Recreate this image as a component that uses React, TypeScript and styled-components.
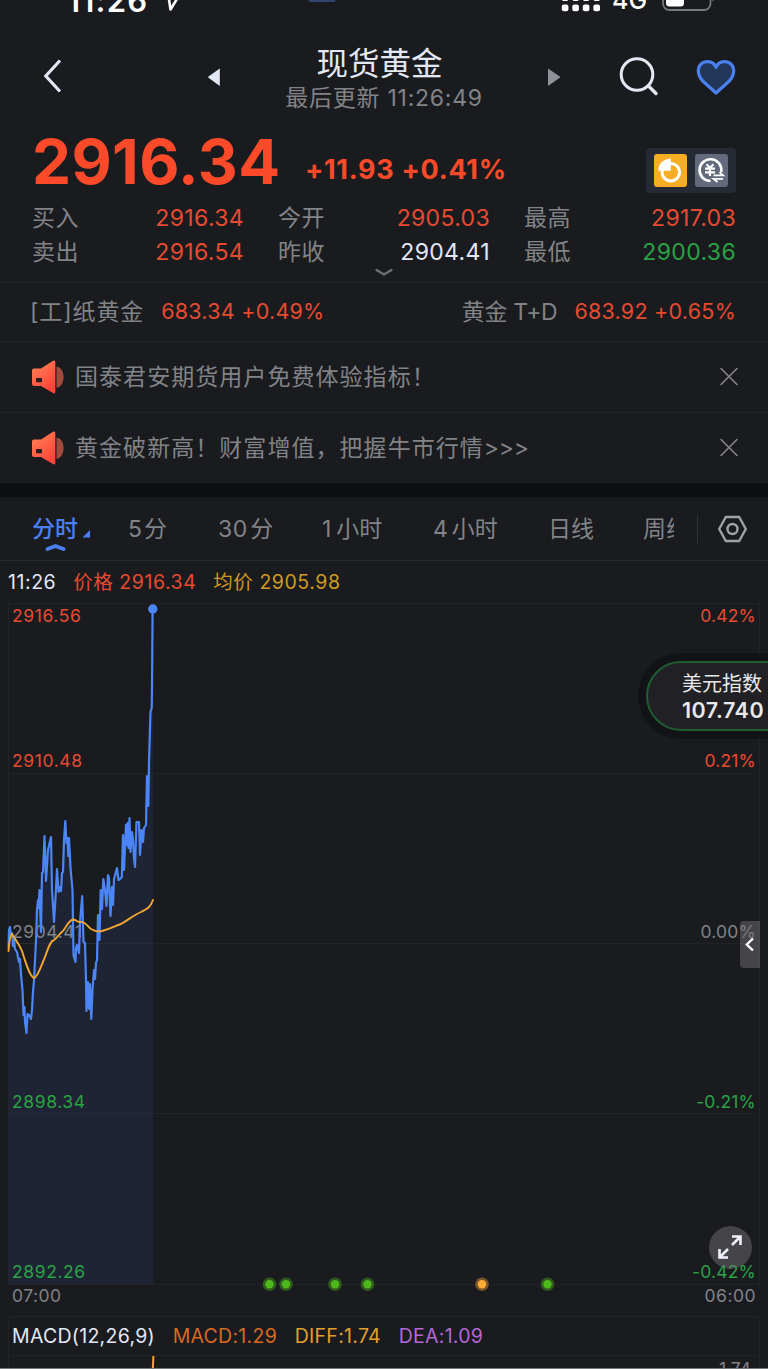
import React from "react";
import styled, { createGlobalStyle } from "styled-components";

const c = {
  bg: "#1a1b1f",
  line: "#222327",
  band: "#0d0e12",
  text: "#e3e8f5",
  grey: "#828387",
  red: "#e64b30",
  hot: "#fa4a29",
  green: "#2ba245",
  blue: "#4a80f0",
  amber: "#f3a733",
};

const Global = createGlobalStyle`
  * { box-sizing: border-box; }
  html, body { margin: 0; background: ${c.bg}; }
  body { overflow: hidden; }
`;

const Screen = styled.div`
  position: relative;
  width: 768px;
  height: 1369px;
  overflow: hidden;
  background: ${c.bg};
  color: ${c.grey};
  font-family: Inter, "Noto Sans CJK SC", sans-serif;
  font-size: 23px;
  font-weight: 400;
  line-height: 1;
  white-space: nowrap;
  border-bottom: 1px solid #77787a;
`;

/* ---------- status bar ---------- */

const StatusBar = styled.div`
  display: flex;
  align-items: flex-end;
  height: 20px;
  overflow: hidden;
  color: #fff;
`;

const Clock = styled.div`
  width: 97px;
  margin: 0 0 4px 67px;
  font-size: 31px;
  font-weight: 600;
  letter-spacing: 1.2px;
`;

const Network = styled.div`
  width: 50px;
  margin-bottom: 7px;
  font-size: 25px;
  font-weight: 500;
`;

const Drawing = styled.svg<{ $ml?: number }>`
  display: block;
  flex: none;
  overflow: visible;
  margin-left: ${(p) => p.$ml ?? 0}px;
`;

/* ---------- header ---------- */

const Header = styled.header`
  display: grid;
  grid-template-columns: 164px 100px 240px 100px 70px 84px;
  align-items: center;
  justify-items: center;
  height: 100px;
`;

const BackButton = styled.div`
  justify-self: start;
  padding: 11px 0 0 42px;
`;

const HeaderButton = styled.div`
  padding-top: 13px;
`;

const Titles = styled.div`
  display: flex;
  flex-direction: column;
  align-items: center;
  align-self: start;
  padding-top: 28px;
`;

const Title = styled.div`
  margin-right: 9px;
  color: ${c.text};
  font-size: 31.5px;
  line-height: 32px;
`;

const Updated = styled.div`
  margin-top: 7px;
  font-size: 23px;
  line-height: 23px;
  letter-spacing: 0.75px;
`;

/* ---------- quote ---------- */

const PriceRow = styled.div`
  display: flex;
  height: 81px;
  padding: 0 32px;
  color: ${c.hot};
`;

const Price = styled.div`
  width: 273px;
  padding-top: 11px;
  font-size: 62px;
  font-weight: 700;
  letter-spacing: 0.4px;
`;

const Change = styled.div`
  flex: 1;
  padding-top: 36px;
  font-size: 27px;
  font-weight: 650;
  letter-spacing: 0.7px;
`;

const Tools = styled.div`
  display: flex;
  gap: 8px;
  width: 90px;
  height: 45px;
  margin-top: 28px;
  padding: 6px 8px;
  border-radius: 4px;
  background: #262a35;
`;

const Stats = styled.div`
  display: grid;
  grid-template-columns: repeat(3, 212px);
  column-gap: 34px;
  grid-auto-rows: 34px;
  height: 81px;
  padding: 0 32px 0;
`;

const Stat = styled.div`
  display: flex;
  justify-content: space-between;
  align-items: center;
  padding-top: 1px;
  letter-spacing: 0.5px;
`;

const Value = styled.span<{ $color?: string; $small?: boolean }>`
  color: ${(p) => p.$color ?? c.red};
  font-size: ${(p) => (p.$small ? 21.5 : 23)}px;
  letter-spacing: ${(p) => (p.$small ? 0.25 : 0.35)}px;
`;

const More = styled.div`
  position: absolute;
  left: 375px;
  top: 267px;
`;

const Related = styled.div`
  display: flex;
  justify-content: space-between;
  align-items: center;
  height: 59px;
  padding: 0 32px 0 30px;
  border-top: 1px solid ${c.line};
`;

const RelatedItem = styled.div<{ $tight?: boolean }>`
  display: flex;
  align-items: center;
  gap: 17px;
  letter-spacing: ${(p) => (p.$tight ? -0.3 : 0.9)}px;
`;

const Notice = styled.div`
  display: flex;
  align-items: center;
  height: 71px;
  padding: 0 30px 0 32px;
  border-top: 1px solid ${c.line};
  letter-spacing: 1.05px;
`;

const NoticeText = styled.div`
  flex: 1;
  margin-left: 10px;
`;

const Chevrons = styled.span`
  letter-spacing: -0.3px;
`;

const Band = styled.div`
  height: 14px;
  background: ${c.band};
`;

/* ---------- period tabs ---------- */

const TabBar = styled.nav`
  display: flex;
  align-items: center;
  height: 64px;
  border-bottom: 1px solid #292a2e;
`;

const Tabs = styled.div`
  display: flex;
  align-items: center;
  gap: 51px;
  width: 674px;
  height: 63px;
  padding: 1px 0 0 32px;
  overflow: hidden;
`;

const Tab = styled.div<{ $active?: boolean; $width: number }>`
  position: relative;
  flex: none;
  width: ${(p) => p.$width}px;
  color: ${(p) => (p.$active ? c.blue : c.grey)};
  font-weight: ${(p) => (p.$active ? 500 : 400)};
`;

const TabNumber = styled.span<{ $gap: number }>`
  margin-right: ${(p) => p.$gap}px;
  letter-spacing: 0.5px;
`;

const TabMark = styled.svg`
  position: absolute;
  left: 13px;
  top: 6px;
  overflow: visible;
`;

const Settings = styled.div`
  display: flex;
  align-items: center;
  height: 28px;
  margin-left: 23px;
  padding-left: 20px;
  border-left: 1px solid #303135;
`;

/* ---------- chart ---------- */

const Legend = styled.div`
  display: flex;
  align-items: center;
  gap: 17px;
  height: 42px;
  padding: 2px 0 0 8px;
  font-size: 19.5px;
  letter-spacing: 0.55px;
`;

const Ink = styled.span<{ $color: string }>`
  color: ${(p) => p.$color};
`;

const Chart = styled.div`
  position: relative;
  width: 752px;
  height: 682px;
  margin-left: 8px;
`;

const Layer = styled.svg`
  position: absolute;
  inset: 0;
  display: block;
  overflow: visible;
`;

const AxisLabel = styled.span<{ $top: number; $side: "left" | "right"; $color: string }>`
  position: absolute;
  top: ${(p) => p.$top}px;
  ${(p) => p.$side}: 4px;
  color: ${(p) => p.$color};
  font-size: 17.5px;
  letter-spacing: ${(p) => (p.$side === "left" ? 0.6 : 0.2)}px;
`;

const Times = styled.div`
  display: flex;
  justify-content: space-between;
  height: 31px;
  padding: 2px 12px 0;
  font-size: 17.5px;
  letter-spacing: 0.5px;
`;

const MacdPanel = styled.section`
  width: 752px;
  height: 60px;
  margin-left: 8px;
  border: 1px solid ${c.line};
  border-bottom: 0;
`;

const MacdLegend = styled.div`
  display: flex;
  align-items: center;
  gap: 17.7px;
  height: 39px;
  padding: 1px 0 0 3px;
  border-bottom: 1px solid ${c.line};
  font-size: 19.5px;
  letter-spacing: 0.28px;
`;

const MacdPlot = styled.div`
  display: flex;
  justify-content: space-between;
  padding-right: 8px;
  font-size: 17.5px;
`;

const ScaleMax = styled.span`
  margin-top: 4px;
`;

/* ---------- floating controls ---------- */

const IndexPill = styled.aside`
  position: absolute;
  left: 646px;
  top: 661px;
  width: 160px;
  height: 70px;
  padding: 11px 0 0 34px;
  border: 2.5px solid #205c31;
  border-radius: 35px;
  background: #212024;
  box-shadow: 0 0 0 8px #121317;
  color: #e8e9ec;
  font-size: 20px;
`;

const IndexValue = styled.div`
  margin-top: 6px;
  font-size: 21.5px;
  font-weight: 600;
  letter-spacing: 0.5px;
`;

const Drawer = styled.div`
  position: absolute;
  right: 0;
  top: 318px;
  display: grid;
  place-items: center;
  width: 20px;
  height: 47px;
  border-radius: 4px 0 0 4px;
  background: rgba(112, 112, 116, 0.5);
`;

const Expand = styled.div`
  position: absolute;
  left: 701px;
  top: 623px;
  display: grid;
  place-items: center;
  width: 43px;
  height: 43px;
  border-radius: 50%;
  background: rgba(112, 112, 116, 0.5);
`;

const priceLine =
  "8.5,948 9,930 10,927 11,937 12,933 13,946 14,940 15,949 17,952 19,962 20,959 21,974 22.5,990 23.5,1015 24.5,1007 25,1022 26.5,1033 27.5,1014 29,1015 31,1019 32,1010 33,992 34,980 35,960 36,940 37,910 38,900 38.5,908 39.5,890 41,932 42,873 43,872 44.5,836 45.5,865 46,881 48,850 51,837 52,890 54,922 55.5,898 57,869 58.5,892 60,887 61,891 62,873 63,872 64,840 65.3,821 66.5,843 67.5,838 68.3,856 69,838 70.5,868 72.5,890 73.5,955 75.5,962 76,948 77,945 79,953 80,922 82.2,896 83.5,942 85,943 86,980 86.5,1011 88,982 89,1009 90,984 91.3,1019 92.5,990 94,970 95,979 96,963 97,960 98,915 99.5,940 100.7,890 102,909 103.3,879 105,890 106.5,906 108,875 109,878 110.5,916 112,887 113,905 114,879 117,868 118.5,880 120,879 121.8,877 123,835 124,870 126,825 126.8,845 127.5,823 128.5,848 129.5,818 130.5,852 132,832 133,840 134,858 135,867 136.5,822 139,822 140,855 141.5,830 143,842 144,828 146,825 147,776 148.3,806 149,762 149.8,735 150.5,712 151.7,708 152,690 152.6,609";

const averageLine =
  "M8.5 951 Q10 934 12 934 C15 940 19 943 22 951 C26 964 30 977 34 978 C38 977 41 966 45 957 C48 949 50 941 54 940 C58 937 60 933 63 931 C67 926 69 920 73 919.5 C77 920 77 922 80 922 C85 921 88 927 91 929 C95 931 97 932 102 931 C110 929 115 926 121 924 C128 920 134 915 141 912 C147 909 150 908 153 900";

const events: [number, string][] = [
  [269.5, "#4db81c"],
  [286, "#4db81c"],
  [335, "#4db81c"],
  [367.5, "#4db81c"],
  [482, "#ffac36"],
  [547.5, "#4db81c"],
];

const stats: [string, string, string?][] = [
  ["买入", "2916.34"],
  ["今开", "2905.03"],
  ["最高", "2917.03"],
  ["卖出", "2916.54"],
  ["昨收", "2904.41", c.text],
  ["最低", "2900.36", c.green],
];

const tabs: { n?: string; label: string; w: number; gap?: number }[] = [
  { n: "5", label: "分", w: 39, gap: 1.5 },
  { n: "30", label: "分", w: 53, gap: 2.5 },
  { n: "1", label: "小时", w: 60, gap: 4.5 },
  { n: "4", label: "小时", w: 64, gap: 3.5 },
  { label: "日线", w: 44 },
  { label: "周线", w: 46 },
];

const axis: [number, string, string, string][] = [
  [4, "2916.56", "0.42%", c.red],
  [149, "2910.48", "0.21%", c.red],
  [320, "2904.41", "0.00%", c.grey],
  [490, "2898.34", "-0.21%", c.green],
  [660, "2892.26", "-0.42%", c.green],
];

const Horn = () => (
  <Drawing width="33" height="34" viewBox="0 0 33 34">
    <defs>
      <linearGradient id="horn" x1="0" y1="0" x2="0.6" y2="1">
        <stop offset="0" stopColor="#ff8658" />
        <stop offset="1" stopColor="#fb463a" />
      </linearGradient>
    </defs>
    <path d="M24.5 6.5 C34 8 34 26 24.5 28 Z" fill="#a04b3b" />
    <path
      d="M2 8.5 H9 L21 0.8 Q23.3 -0.3 23.3 2 V32 Q23.3 34.3 21 33 L9 26 H2 Q0 26 0 24 V10.5 Q0 8.5 2 8.5 Z"
      fill="url(#horn)"
    />
    <rect x="4" y="18" width="6" height="4.2" rx="0.5" fill="#2a1c1e" />
  </Drawing>
);

const Close = () => (
  <Drawing width="18" height="18" viewBox="0 0 18 18" stroke="#86878b" strokeWidth="1.6" strokeLinecap="round">
    <path d="M1 0.5 L17 16.5 M17 0.5 L1 16.5" />
  </Drawing>
);

export default function App() {
  return (
    <Screen>
      <Global />
      <StatusBar>
        <Clock>11:26</Clock>
        <Drawing width="20" height="20" viewBox="164 0 20 20" fill="none" stroke="#fff" strokeWidth="2.6" strokeLinejoin="round">
          <path d="M160 -4 H168.5 L170.5 9.5 L180 -6" />
        </Drawing>
        <Drawing $ml={124} width="28" height="20" viewBox="0 0 28 20">
          <rect y="-10" width="28" height="12" rx="3" fill="#30466f" />
        </Drawing>
        <Drawing $ml={225} width="51" height="20" viewBox="0 0 51 20" fill="#fff">
          {[0, 10.5, 21, 31.6].map((x) => (
            <g key={x}>
              <rect x={x + 0.8} y="4.5" width="6.6" height="6.8" rx="2" />
              <rect x={x + 0.8} y="-6" width="6.6" height="7" rx="2" />
            </g>
          ))}
        </Drawing>
        <Network>4G</Network>
        <Drawing width="54" height="20" viewBox="0 0 54 20">
          <rect x="1" y="-14" width="47.5" height="24" rx="6.5" fill="none" stroke="#77787b" strokeWidth="1.8" />
          <rect x="4" y="-12" width="18" height="18.5" rx="3.5" fill="#fff" />
          <path d="M50.5 -6 V1.5 Q53 0 53 -3 Z" fill="#77787b" />
        </Drawing>
      </StatusBar>

      <Header>
        <BackButton>
          <Drawing width="20" height="34" viewBox="0 0 20 34" fill="none" stroke={c.text} strokeWidth="3.2">
            <path d="M18 1.5 L3.8 17 L18 32.5" />
          </Drawing>
        </BackButton>
        <HeaderButton>
          <Drawing width="14" height="20" viewBox="0 0 14 20">
            <path d="M12.8 1.4 V19 L1.5 10.8 Q0.8 10.2 1.5 9.6 Z" fill={c.text} />
          </Drawing>
        </HeaderButton>
        <Titles>
          <Title>现货黄金</Title>
          <Updated>最后更新 11:26:49</Updated>
        </Titles>
        <HeaderButton>
          <Drawing width="14" height="20" viewBox="0 0 14 20">
            <path d="M1 1.4 V19 L12.8 10.8 Q13.4 10.2 12.8 9.6 Z" fill="#8f9199" />
          </Drawing>
        </HeaderButton>
        <HeaderButton>
          <Drawing width="40" height="40" viewBox="0 0.5 40 40" fill="none" stroke={c.text} strokeWidth="3" strokeLinecap="round">
            <circle cx="18" cy="18" r="15.8" />
            <path d="M29.5 29.5 L37 37" strokeWidth="3.4" />
          </Drawing>
        </HeaderButton>
        <HeaderButton>
          <Drawing width="40" height="36" viewBox="0 -0.5 40 36" fill="#223658" stroke={c.blue} strokeWidth="3.2" strokeLinejoin="round">
            <path d="M20 8 C17 0 6 0.5 2.8 8 C1 14 3.5 18 7 21.8 L20 33.5 L33 21.8 C36.5 18 39 14 37.2 8 C34 0.5 23 0 20 8 Z" />
          </Drawing>
        </HeaderButton>
      </Header>

      <PriceRow>
        <Price>2916.34</Price>
        <Change>+11.93 +0.41%</Change>
        <Tools>
          <Drawing width="33" height="33" viewBox="0 0 33 33">
            <rect width="33" height="33" rx="3" fill="#f7ad24" />
            <circle cx="16.8" cy="18.2" r="8.8" fill="none" stroke="#fff" strokeWidth="3" />
            <path d="M16.8 4.5 V16.8 H4.2 Q4.5 6 16.8 4.5 Z" fill="#fff" />
          </Drawing>
          <Drawing width="33" height="33" viewBox="0 0 33 33" fill="none" stroke="#fff" strokeWidth="2.2">
            <rect width="33" height="33" rx="3" fill="#636a7c" stroke="none" />
            <path d="M15.5 27 A10.9 10.9 0 1 1 26.2 18" strokeWidth="2.6" />
            <path d="M11.6 10.3 L15 14 L18.4 10.3 M15 14 V22 M10 14.6 H20 M10 18.4 H20" />
            <path d="M18.5 21.3 H28 L24.5 18.2 M28 24.8 H18.5 L22.5 28" strokeWidth="1.8" />
          </Drawing>
        </Tools>
      </PriceRow>

      <Stats>
        {stats.map(([label, value, color]) => (
          <Stat key={label}>
            {label}
            <Value $color={color}>{value}</Value>
          </Stat>
        ))}
      </Stats>
      <More>
        <Drawing width="18" height="10" viewBox="0 0 18 10" fill="none" stroke="#717276" strokeWidth="2.2" strokeLinecap="round">
          <path d="M1.5 3 L9 7.4 L16.5 3" />
        </Drawing>
      </More>

      <Related>
        <RelatedItem>
          [工]纸黄金 <Value $small>683.34 +0.49%</Value>
        </RelatedItem>
        <RelatedItem $tight>
          黄金 T+D <Value $small>683.92 +0.65%</Value>
        </RelatedItem>
      </Related>

      <Notice>
        <Horn />
        <NoticeText>国泰君安期货用户免费体验指标！</NoticeText>
        <Close />
      </Notice>
      <Notice>
        <Horn />
        <NoticeText>
          黄金破新高！财富增值，把握牛市行情<Chevrons>&gt;&gt;&gt;</Chevrons>
        </NoticeText>
        <Close />
      </Notice>
      <Band />

      <TabBar>
        <Tabs>
          <Tab $active $width={45}>
            分时
            <TabMark width="48" height="30" viewBox="0 0 48 30">
              <path d="M45 6 V13.5 H37.5 Z" fill={c.blue} />
              <path d="M2.5 25 L10.5 22 L18.5 25" fill="none" stroke={c.blue} strokeWidth="4" strokeLinecap="round" strokeLinejoin="round" />
            </TabMark>
          </Tab>
          {tabs.map((t) => (
            <Tab key={(t.n ?? "") + t.label} $width={t.w}>
              {t.n && <TabNumber $gap={t.gap ?? 0}>{t.n}</TabNumber>}
              {t.label}
            </Tab>
          ))}
        </Tabs>
        <Settings>
          <Drawing width="29" height="28" viewBox="0 0 29 28" fill="none" stroke="#a0a2a8" strokeWidth="2.4" strokeLinejoin="round">
            <path d="M7.8 2 H21.2 L27.8 14 L21.2 26 H7.8 L1.2 14 Z" />
            <circle cx="14.5" cy="14" r="5" />
          </Drawing>
        </Settings>
      </TabBar>

      <Legend>
        <Ink $color={c.text}>11:26</Ink>
        <Ink $color={c.red}>价格 2916.34</Ink>
        <Ink $color="#d29a1f">均价 2905.98</Ink>
      </Legend>

      <Chart>
        <Layer width="752" height="682" viewBox="8 603 752 682">
          <g stroke={c.line} fill="none">
            <rect x="8.5" y="603.5" width="751" height="681" />
            <path d="M8 773.5 H753 M8 943.5 H753 M8 1113.5 H753" />
          </g>
          <polygon points={`8.5,1284 ${priceLine} 153,609 153,1284`} fill="#1e2433" />
          <path d="M8 943.5 H153 M8 1113.5 H153" stroke="#262b39" />
        </Layer>
        {axis.map(([top, price, percent, color]) => (
          <React.Fragment key={price}>
            <AxisLabel $side="left" $top={top} $color={color}>{price}</AxisLabel>
            <AxisLabel $side="right" $top={top} $color={color}>{percent}</AxisLabel>
          </React.Fragment>
        ))}
        <Layer width="752" height="682" viewBox="8 603 752 682" fill="none">
          <polyline points={priceLine} stroke="#4c85f5" strokeWidth="2.2" strokeLinejoin="round" />
          <circle cx="152.8" cy="609" r="4.7" fill="#4c85f5" />
          <path d={averageLine} stroke={c.amber} strokeWidth="1.9" strokeLinecap="round" />
          {events.map(([x, color]) => (
            <g key={x} fill={color}>
              <circle cx={x} cy="1284.3" r="6.8" opacity="0.4" />
              <circle cx={x} cy="1284.3" r="4.2" />
            </g>
          ))}
        </Layer>
        <Drawer>
          <Drawing width="9" height="13" viewBox="1 0 9 13" fill="none" stroke="#fff" strokeWidth="2.4">
            <path d="M8 0.5 L1.8 6.5 L8 12.5" />
          </Drawing>
        </Drawer>
        <Expand>
          <Drawing width="25" height="25" viewBox="0.5 0.5 25 25" fill="none" stroke="#eef1fb" strokeWidth="2.6">
            <path d="M14.5 10.5 L23 2 M14.5 2 H23 V10.5 M10.5 14.5 L2 23 M2 14.5 V23 H10.5" />
          </Drawing>
        </Expand>
      </Chart>

      <Times>
        <span>07:00</span>
        <span>06:00</span>
      </Times>

      <MacdPanel>
        <MacdLegend>
          <Ink $color={c.text}>MACD(12,26,9)</Ink>
          <Ink $color="#d9691f">MACD:1.29</Ink>
          <Ink $color="#e0a02a">DIFF:1.74</Ink>
          <Ink $color="#b566d6">DEA:1.09</Ink>
        </MacdLegend>
        <MacdPlot>
          <Drawing $ml={142} width="4" height="18" viewBox="0 0 4 18">
            <path d="M2.4 0 L1.6 18" stroke={c.amber} strokeWidth="2" />
          </Drawing>
          <ScaleMax>1.74</ScaleMax>
        </MacdPlot>
      </MacdPanel>

      <IndexPill>
        美元指数
        <IndexValue>107.740</IndexValue>
      </IndexPill>
    </Screen>
  );
}
